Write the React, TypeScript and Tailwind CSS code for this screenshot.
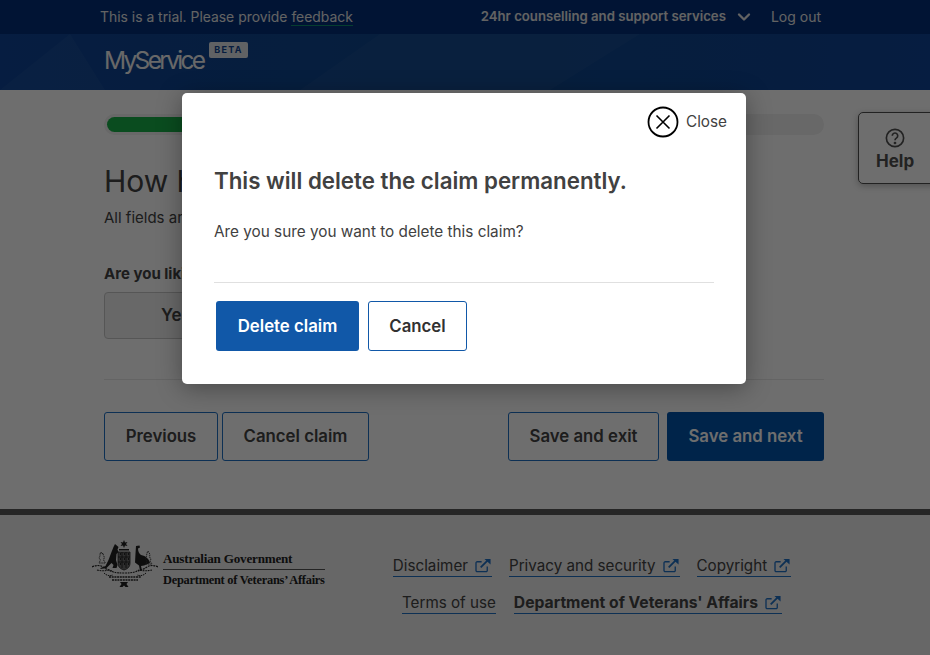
import { ChevronDown } from "lucide-react";

function ExternalIcon() {
  return (
    <svg viewBox="0 0 18 16" className="ml-[7px] inline-block h-[15px] w-[17px] align-[-2px] text-[#1f6fc4]" fill="none" stroke="currentColor">
      <path d="M13 9v4.200a1.300 1.300 0 0 1-1.300 1.300H2.300A1.300 1.300 0 0 1 1 13.200V5.300A1.300 1.300 0 0 1 2.300 4H7" strokeWidth="1.400" />
      <path d="M6 10l8-8" strokeWidth="1.800" />
      <path d="M10 1h6.500v6z" fill="currentColor" stroke="none" />
    </svg>
  );
}

function FooterLink({ children, bold }: { children: React.ReactNode; bold?: boolean }) {
  return (
    <a className={`whitespace-nowrap border-b border-[#1f6fc4] text-[#434343] ${bold ? "text-[15.700px] font-bold" : "text-[15.200px]"} leading-[21px]`}>
      {children}
    </a>
  );
}

function CoatOfArms() {
  return (
    <svg viewBox="0 0 66 48" className="h-[48px] w-[66px]" fill="#222">
      <path d="M32 0l1 2.400 2.500-.4-1.500 2 1.500 2-2.500-.4-1 2.400-1-2.400-2.500.4 1.500-2-1.500-2 2.500.4z" />
      <path d="M27 9h10v1.500H27z" />
      <path d="M23 4l3.500 3-1 2.500 1 2.500-2 2-.5 6 1.500 5-1 3h-4l1-3-2-2-5 5-6 1v-1l5-2 3-6 3-8 2-5z" />
      <path d="M44 6l3.500-.5.500 2-2 1c0 3 1 5 3 6.500 5 1 8 4 9 8l-6 2.500-3 .5 1 4.500h-2l-1-5-4-3 .5-9z" />
      <path d="M26 12h12v11c0 4-2.500 6-6 7-3.500-1-6-3-6-7z" fill="#6b6b6b" stroke="#222" strokeWidth=".8" />
      <path d="M26 17h12M26 22h12M30 12v16M34 12v16" stroke="#222" strokeWidth=".9" />
      <path d="M28 14h1M32 14h1M36 14h1M28 19h1M32 19h1M36 19h1M28 24h1M32 24h1M36 24h1" stroke="#111" strokeWidth="1.500" />
      <path d="M8 14l1-2 1 2 1-1 .5 3 1 1-1 3 2 3H7l1.500-3-1.500-2 1-2zM55 13l1-2 1 2 1 1-.5 3 1.500 2-1 2 2 3h-6l1-3-1.500-2 1-3z" fill="none" stroke="#333" strokeWidth=".9" strokeDasharray="1.500 .7" />
      <path d="M0 27c4-2 8-2 11 0s6 3 9 4M66 27c-4-2-8-2-11 0s-6 3-9 4" fill="none" stroke="#222" strokeWidth="1.200" strokeDasharray="2 .8" />
      <path d="M5 30c4 1 8 1 12 0 3 2 6 3 15 3s12-1 15-3c4 1 8 1 13 0" fill="none" stroke="#222" strokeWidth="1.100" strokeDasharray="1.800 .8" />
      <path d="M12 33c3 3 6 3 9 2M54 33c-3 3-6 3-9 2" fill="none" stroke="#222" strokeWidth="1" strokeDasharray="1.500 .8" />
      <path d="M17 37h32M20 40h26" stroke="#2a2a2a" strokeWidth="1.500" strokeDasharray="2 .7" />
      <path d="M28 42h8l-1.500 2 2 3h-3L32 45.500 30.500 47h-3l2-3z" />
    </svg>
  );
}

export default function App() {
  return (
    <div className="relative h-[655px] w-[930px] overflow-hidden bg-white font-['Inter',sans-serif] text-[#434343]">
      <div className="flex h-[34px] items-center justify-between bg-[#04307a] pl-[100px] pr-[109px] text-[#e6e6e6]">
        <span className="text-[13.900px]">
          This is a trial. Please provide <a className="border-b border-[#0e8f6d] leading-[17px]">feedback</a>
        </span>
        <div className="flex items-center">
          <span className="text-[13.200px] font-semibold">24hr counselling and support services</span>
          <ChevronDown className="ml-[8px] size-[20px]" strokeWidth={2.800} />
          <span className="ml-[17px] text-sm">Log out</span>
        </div>
      </div>

      <div className="relative h-[56px] overflow-hidden bg-gradient-to-r from-[#0e4496] via-[#10478c] to-[#0e4496]">
        <svg viewBox="0 0 930 56" className="absolute inset-0 h-full w-full">
          <path d="M70 0l35 56H0z" fill="#fff" opacity=".04" />
          <path d="M380 0h260l-90 56H300z" fill="#fff" opacity=".03" />
        </svg>
        <div className="relative flex items-start pl-[104px]">
          <span className="mt-[10px] text-[24.500px] leading-8 tracking-[-2.700px] text-[#f2f2f2]">MyService</span>
          <span className="ml-[6px] mt-[8px] rounded-[2px] bg-[#dfe3e8] px-[5px] text-[9px] font-bold leading-4 tracking-[1.300px] text-[#0e4592]">
            BETA
          </span>
        </div>
      </div>

      <div className="px-[104px]">
        <div className="mt-[24px] h-[21px] w-[720px] rounded-full bg-[#f0f0f0] p-[3px]">
          <div className="h-full w-[200px] rounded-full bg-[#18b048]" />
        </div>
        <h1 className="mt-[26px] text-[30px] leading-[40px]">How have you been?</h1>
        <p className="mt-[6px] text-[15px] leading-[22px]">All fields are required</p>
        <p className="mt-[34px] text-[15px] font-bold leading-[22px]">Are you liking it?</p>
        <div className="mt-[7px] flex h-[47px] w-[144px] items-center justify-center rounded-[4px] border border-[#c8c8c8] bg-[#f2f2f2] text-[17px] font-semibold">
          Yes
        </div>
        <hr className="mt-[40px] w-[720px] border-[#e8e8e8]" />
        <div className="mt-[32px] flex w-[720px] text-[16.800px] font-semibold">
          <button className="h-[49px] w-[114px] rounded-[3px] border border-[#1f6fc4]">Previous</button>
          <button className="ml-[4px] h-[49px] w-[147px] rounded-[3px] border border-[#1f6fc4]">Cancel claim</button>
          <button className="ml-auto h-[49px] w-[151px] rounded-[3px] border border-[#1f6fc4]">Save and exit</button>
          <button className="ml-[8px] h-[49px] w-[157px] rounded-[3px] bg-[#0254ac] text-white">Save and next</button>
        </div>
      </div>

      <div className="mt-[48px] border-t-[6px] border-[#585858] bg-[#eeeeee]">
        <div className="flex h-[140px] pl-[92px] pt-[25px]">
          <CoatOfArms />
          <div className="ml-[5px] mt-[12px] h-fit w-[162px] font-['Liberation_Serif',serif] font-bold text-[#222]">
            <div className="border-b border-[#555] pb-[3px] text-[13.100px] leading-[14px] tracking-[-0.200px]">Australian Government</div>
            <div className="whitespace-nowrap pt-[3px] text-[12.400px] leading-[14px] tracking-[-0.250px]">Department of Veterans’ Affairs</div>
          </div>
          <div className="ml-[67px] w-[400px]">
            <div className="flex justify-center gap-[17px] pt-[15px]">
              <FooterLink>Disclaimer<ExternalIcon /></FooterLink>
              <FooterLink>Privacy and security<ExternalIcon /></FooterLink>
              <FooterLink>Copyright<ExternalIcon /></FooterLink>
            </div>
            <div className="mt-[15px] flex justify-center gap-[18px]">
              <FooterLink>Terms of use</FooterLink>
              <FooterLink bold>Department of Veterans' Affairs<ExternalIcon /></FooterLink>
            </div>
          </div>
        </div>
      </div>

      <div className="absolute inset-0 bg-black/[.57]" />

      <div className="absolute left-[858px] top-[112px] flex h-[72px] w-[90px] flex-col rounded-[5px] border border-[#222] pl-[17px] pt-[15px] text-[#222] shadow-[0_2px_6px_rgba(0,0,0,.25)]">
        <svg viewBox="0 0 22 22" className="ml-[9px] size-[20px]" fill="none" stroke="currentColor" strokeWidth="1.800">
          <circle cx="11" cy="11" r="9.500" />
          <path d="M8 8.500a3 3 0 1 1 4.500 2.600c-1 .6-1.500 1.100-1.500 2.400" />
          <circle cx="11" cy="16.500" r=".6" />
        </svg>
        <span className="mt-[3px] text-[17px] font-bold leading-5">Help</span>
      </div>

      <div className="absolute left-[182px] top-[93px] h-[291px] w-[564px] rounded-[5px] bg-white px-[32px] shadow-[0_4px_24px_rgba(0,0,0,.35)]">
        <div className="flex items-center justify-end pt-[13px]">
          <button className="-mr-[13px] flex items-center text-[15.300px]">
            <svg viewBox="0 0 32 32" className="size-[32px]" fill="none" stroke="#000">
              <circle cx="16" cy="16" r="14.500" strokeWidth="1.800" />
              <path d="M9.500 9.500l13 13M22.500 9.500l-13 13" strokeWidth="1.600" />
            </svg>
            <span className="ml-[7px] text-[#414141]">Close</span>
          </button>
        </div>
        <h2 className="mt-[26px] text-[22.300px] font-semibold leading-[34px] text-[#414141]">This will delete the claim permanently.</h2>
        <p className="mt-[22px] text-[15.300px] leading-[24px] text-[#414141]">Are you sure you want to delete this claim?</p>
        <hr className="mt-[38px] border-[#e0e0e0]" />
        <div className="ml-[2px] mt-[18px] flex gap-[9px] text-[16.800px] font-semibold">
          <button className="h-[50px] w-[143px] rounded-[3px] bg-[#1158a8] pt-[2px] text-white">Delete claim</button>
          <button className="h-[50px] w-[99px] rounded-[3px] border border-[#1158a8] bg-white pt-[2px] text-[#313131]">Cancel</button>
        </div>
      </div>
    </div>
  );
}
